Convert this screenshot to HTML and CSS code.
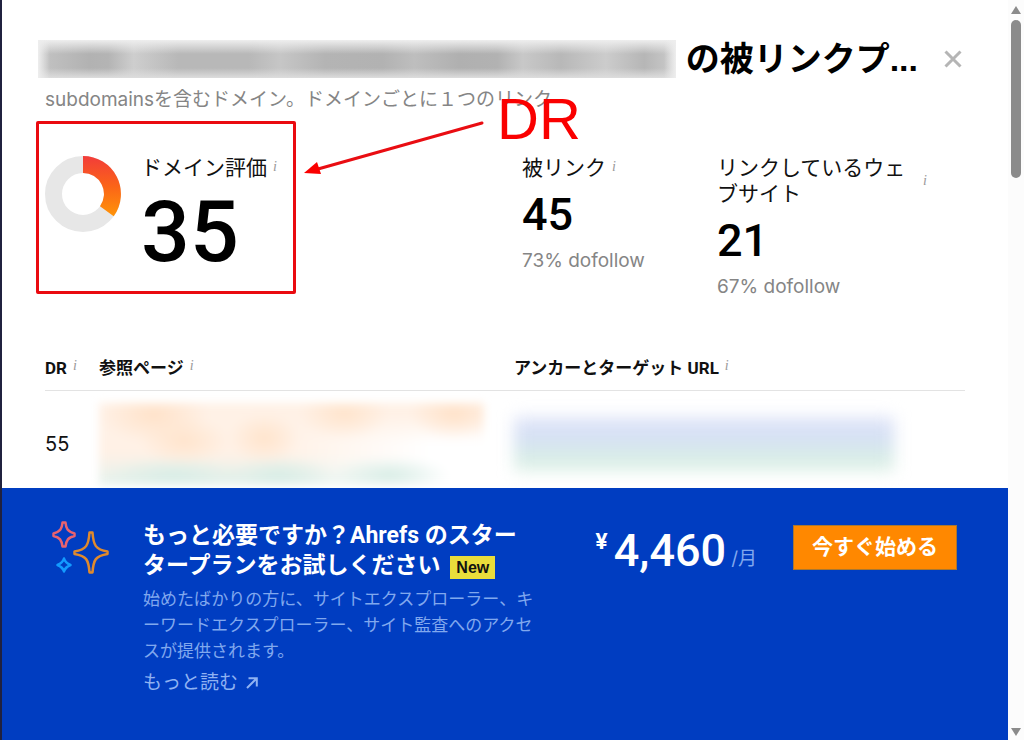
FILE: index.html
```html
<!DOCTYPE html>
<html lang="ja">
<head>
<meta charset="UTF-8" />
<meta name="viewport" content="width=device-width, initial-scale=1" />
<title>被リンクプロファイル</title>
<link rel="stylesheet" href="styles.css">
</head>
<body>
  <main class="dialog">
    <section class="report">
      <header class="report-header">
        <div class="title-row">
          <div class="redacted-title"></div>
          <h1>の被リンクプ...</h1>
          <button type="button" class="close" aria-label="閉じる">
            <svg viewBox="0 0 18 18" aria-hidden="true"><path d="M1.5 1.5 16.5 16.5M16.5 1.5 1.5 16.5" /></svg>
          </button>
        </div>
        <p class="subtitle">subdomainsを含むドメイン。ドメインごとに１つのリンク</p>
      </header>

      <div class="metrics">
        <div class="metric metric-rating">
          <svg class="donut" viewBox="0 0 76 76" aria-hidden="true">
            <defs>
              <linearGradient id="rating" x1="0" y1="0" x2="0" y2="1">
                <stop offset="0" stop-color="#f23c3a" />
                <stop offset="0.5" stop-color="#fb6418" />
                <stop offset="1" stop-color="#ff9408" />
              </linearGradient>
            </defs>
            <circle cx="38" cy="38" r="29.5" fill="none" stroke="#e7e7e7" stroke-width="17" />
            <path d="M38 0A38 38 0 0 1 68.7 60.3L55 50.3A21 21 0 0 0 38 17Z" fill="url(#rating)" />
          </svg>
          <div>
            <h2>ドメイン評価<i class="info">i</i></h2>
            <p class="value value-large">35</p>
          </div>
        </div>
        <div class="metric">
          <h2>被リンク<i class="info">i</i></h2>
          <p class="value">45</p>
          <p class="note">73% dofollow</p>
        </div>
        <div class="metric">
          <h2 class="label-wrap"><span>リンクしているウェブサイト</span><i class="info">i</i></h2>
          <p class="value">21</p>
          <p class="note">67% dofollow</p>
        </div>
      </div>

      <table class="links">
        <thead>
          <tr>
            <th class="col-dr">DR<i class="info">i</i></th>
            <th class="col-page">参照ページ<i class="info">i</i></th>
            <th>アンカーとターゲット URL<i class="info">i</i></th>
          </tr>
        </thead>
        <tbody>
          <tr>
            <td>55</td>
            <td><div class="redacted-page"></div></td>
            <td><div class="redacted-anchor"></div></td>
          </tr>
        </tbody>
      </table>
    </section>

    <section class="promo">
      <svg class="sparkles" viewBox="0 0 58 54" aria-hidden="true">
        <path stroke="#e8636f" d="M10.500 1.500h3C14 7.500 15.500 10.500 22.500 12.500v2.500C16 16.500 14.500 19 13.500 25.500h-3C9.500 19 8 16.500 1.500 15v-2.500C8.500 10.500 10 7.500 10.500 1.500Z" />
        <path stroke="#e08a2c" d="M37.500 11.500h3C41.500 24.500 43.500 28.500 55.500 30.500v2.500C43.500 35 41.500 38.500 40.500 51.500h-3C36.500 38.500 34.500 35 22.500 33v-2.500C34.500 28.500 36.500 24.500 37.500 11.500Z" />
        <path stroke="#139bff" d="M12 37.500C13 41 15 42.500 18.500 44 15 45.500 13 47 12 50.500 11 47 9 45.500 5.500 44 9 42.500 11 41 12 37.500Z" />
      </svg>
      <div class="promo-text">
        <h2>もっと必要ですか？Ahrefs のスタータープランをお試しください <span class="badge">New</span></h2>
        <p>始めたばかりの方に、サイトエクスプローラー、キーワードエクスプローラー、サイト監査へのアクセスが提供されます。</p>
        <a href="#">もっと読む
          <svg viewBox="0 0 12 12" aria-hidden="true"><path d="M1 11 10.500 1.500M2.500 1.200h8.300v8.300" /></svg>
        </a>
      </div>
      <p class="price"><span class="currency">¥</span><span class="amount">4,460</span><span class="period">/月</span></p>
      <button type="button" class="cta">今すぐ始める</button>
    </section>

    <!-- Annotations drawn over the report -->
    <div class="mark-box"></div>
    <svg class="mark-arrow" viewBox="0 0 182 58" aria-hidden="true">
      <path d="M178 4 14 50" stroke="#e90d12" stroke-width="3" stroke-linecap="round" />
      <path d="M0 54 13 43 17 55Z" fill="#fa0000" />
    </svg>
    <span class="mark-label">DR</span>
  </main>

  <div class="scrollbar" aria-hidden="true">
    <svg viewBox="0 0 10 8"><path d="M5 0 10 8H0Z" /></svg>
    <div class="track"><div class="thumb"></div></div>
    <svg viewBox="0 0 10 8"><path d="M0 0h10L5 8Z" /></svg>
  </div>
</body>
</html>
```
FILE: styles.css
```css
/* Reset & base */
*, *::before, *::after {
  box-sizing: border-box;
}

body {
  margin: 0;
  display: flex;
  height: 100vh;
  overflow: hidden;
  border-left: 2px solid #20213f;
  background: #fff;
  color: #111;
  font-family: Inter, "Noto Sans CJK JP", sans-serif;
}

h1, h2, p {
  margin: 0;
}

.dialog {
  position: relative;
  display: flex;
  flex-direction: column;
  flex: 1;
  min-width: 0;
}

/* Header */
.report-header {
  padding: 40px 43px 0 36px;
}

.title-row {
  display: flex;
  align-items: center;
  height: 38px;
}

.redacted-title {
  flex: 1;
  height: 38px;
  background:
    linear-gradient(90deg, #eee, transparent 12px calc(100% - 12px), #eee),
    linear-gradient(#eee, transparent 14px 28px, #ddd),
    linear-gradient(90deg, #c4c4c4, #b2b2b2 8%, #b4b4b4 11%, #cecece 15%, #b8b8b8 22%, #b8b8b8 33%, #c6c6c6 38%, #b4b4b4 45%, #b2b2b2 54%, #bebebe 59%, #b0b0b0 66%, #b2b2b2 72%, #c8c8c8 76%, #b8b8b8 82%, #ccc 89%, #b6b6b6 95%, #ccc);
}

h1 {
  margin-left: 10px;
  font-family: "Liberation Sans", "Noto Sans CJK JP", sans-serif;
  font-size: 34px;
  line-height: 38px;
  font-weight: 700;
  color: #000;
}

.close {
  width: 18px;
  height: 18px;
  margin: 0 3px 0 26px;
  padding: 0;
  border: 0;
  background: none;
  cursor: pointer;
}

.close svg {
  display: block;
  stroke: #b5b5b5;
  stroke-width: 3;
}

.subtitle {
  margin-top: 9px;
  padding-left: 7px;
  font-size: 19px;
  line-height: 26px;
  color: #858585;
}

/* Metrics */
.metrics {
  display: grid;
  grid-template-columns: 477fr 195fr 248fr;
  margin-top: 42px;
  padding: 0 43px;
}

.metric-rating {
  display: flex;
  align-items: flex-start;
  gap: 20px;
}

.donut {
  width: 76px;
  height: 78px;
}

.metric h2 {
  font-size: 21px;
  line-height: 26px;
  font-weight: 400;
}

.info {
  margin-left: 6px;
  font-family: "Liberation Serif", serif;
  font-size: 14px;
  line-height: 1;
  font-weight: 400;
  color: #999;
  vertical-align: 4px;
}

.metric .label-wrap {
  display: flex;
  align-items: center;
  gap: 10px;
}

.label-wrap span {
  width: 190px;
}

.value {
  font-family: Roboto, sans-serif;
  font-size: 45px;
  line-height: 67px;
  font-weight: 500;
  color: #000;
}

.value-large {
  font-size: 86px;
  line-height: 102px;
}

.note {
  font-size: 19px;
  line-height: 26px;
  color: #858585;
}

/* Link table */
.links {
  width: calc(100% - 86px);
  margin: 55px 43px 0;
  border-collapse: collapse;
  table-layout: fixed;
}

.links th {
  padding: 0 0 9px;
  border-bottom: 1px solid #e3e3e3;
  font-family: Roboto, "Noto Sans CJK JP", sans-serif;
  font-size: 17px;
  line-height: 26px;
  font-weight: 700;
  text-align: left;
}

.links td {
  padding: 12px 0 3px;
  font-size: 20px;
  line-height: 26px;
}

.col-dr {
  width: 54px;
}

.col-page {
  width: 415px;
}

.redacted-page {
  width: 385px;
  height: 82px;
  filter: blur(4px);
  background:
    radial-gradient(closest-side, #ffe2c9, transparent) 0 -16px / 110px 56px no-repeat,
    radial-gradient(closest-side, #ffe4cc, transparent) 40px 14px / 90px 48px no-repeat,
    radial-gradient(closest-side, #ffe4cc, transparent) 130px 10px / 70px 50px no-repeat,
    radial-gradient(closest-side, #ffe4cc, transparent) 200px -14px / 90px 50px no-repeat,
    radial-gradient(closest-side, #ffe2c9, transparent) 310px -14px / 90px 50px no-repeat,
    radial-gradient(closest-side, #d8ede6, transparent) 0 54px / 150px 36px no-repeat,
    radial-gradient(closest-side, #d8ede6, transparent) 120px 54px / 120px 36px no-repeat,
    radial-gradient(closest-side, #d8ede6, transparent) 230px 54px / 120px 36px no-repeat,
    linear-gradient(#fff1e6 30%, transparent) 0 0 / 385px 40px no-repeat,
    linear-gradient(90deg, transparent 180px, #fff 330px),
    linear-gradient(#fff1e6 60%, #e6f3ee);
}

.redacted-anchor {
  width: 380px;
  height: 54px;
  filter: blur(8px);
  background: linear-gradient(#dfe4f8, #d5e0f4 40%, #d8ece8 70%, #def1e6);
}

/* Promo */
.promo {
  position: relative;
  display: flex;
  align-items: flex-start;
  flex: 1;
  padding: 33px 51px 0 50px;
  background: #003dc1;
  color: #fff;
}

.sparkles {
  width: 58px;
  height: 54px;
  flex: none;
  fill: none;
  stroke-width: 2.5;
  stroke-linejoin: round;
}

.promo-text {
  width: 393px;
  margin-left: 33px;
}

.promo h2 {
  font-family: Roboto, "Noto Sans CJK JP", sans-serif;
  font-size: 23px;
  line-height: 30px;
  font-weight: 700;
}

.badge {
  display: inline-block;
  margin-left: 4px;
  padding: 0 6px;
  background: #e9dd3b;
  font-family: "Liberation Sans", sans-serif;
  font-size: 16px;
  line-height: 23px;
  color: #111;
}

.promo-text p {
  margin-top: 5px;
  font-size: 17px;
  line-height: 26px;
  color: #80a8ee;
}

.promo-text a {
  display: inline-flex;
  align-items: center;
  gap: 8px;
  margin-top: 6px;
  font-size: 19px;
  line-height: 26px;
  color: #8fb2f2;
  text-decoration: none;
}

.promo-text a svg {
  width: 12px;
  height: 12px;
  fill: none;
  stroke: currentColor;
  stroke-width: 2;
}

.price {
  display: flex;
  align-items: flex-start;
  margin-left: auto;
}

.currency {
  margin-right: 6px;
  font-size: 22px;
  line-height: 40px;
  font-weight: 700;
}

.amount {
  font-family: Roboto, sans-serif;
  font-size: 45px;
  line-height: 60px;
  font-weight: 500;
}

.period {
  margin-left: 5px;
  font-size: 19px;
  line-height: 76px;
  color: #80a8ee;
}

.cta {
  height: 45px;
  margin: 4px 0 0 36px;
  padding: 0 18px 2px 18px;
  border: 1px solid #a9772f;
  background: #ff8800;
  color: #fff;
  font: 700 21px/26px Inter, "Noto Sans CJK JP", sans-serif;
  cursor: pointer;
}

/* Annotations */
.mark-box {
  position: absolute;
  top: 121px;
  left: 34px;
  width: 260px;
  height: 173px;
  border: 3px solid #ea0a10;
  border-radius: 2px;
}

.mark-arrow {
  position: absolute;
  top: 119px;
  left: 302px;
  width: 182px;
  height: 58px;
}

.mark-label {
  position: absolute;
  top: 90px;
  left: 495px;
  font-family: "Liberation Sans", sans-serif;
  font-size: 58px;
  line-height: 58px;
  color: #fa0000;
}

/* Scrollbar */
.scrollbar {
  display: flex;
  flex-direction: column;
  align-items: center;
  gap: 6px;
  width: 16px;
  padding: 6px 0 4px;
  background: #fcfcfc;
}

.scrollbar svg {
  width: 10px;
  height: 8px;
  fill: #8b8b8b;
}

.track {
  flex: 1;
}

.thumb {
  width: 10px;
  height: 158px;
  border-radius: 5px;
  background: #8b8b8b;
}
```
